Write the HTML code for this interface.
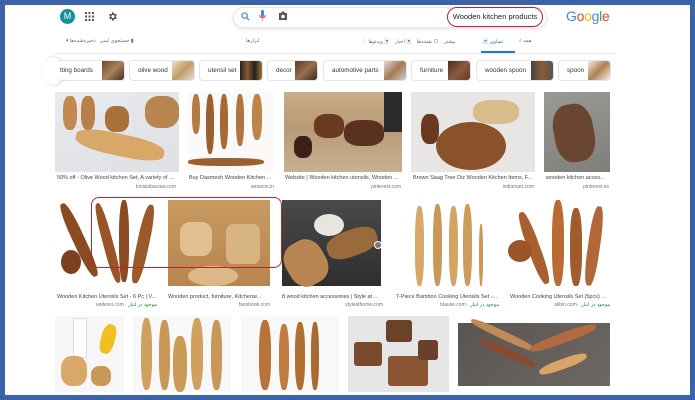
<!DOCTYPE html>
<html><head><meta charset="utf-8"><style>
*{margin:0;padding:0;box-sizing:border-box}
body{width:695px;height:400px;background:#3a62a6;position:relative;overflow:hidden;font-family:"Liberation Sans","Noto Sans CJK SC",sans-serif}
.in{position:absolute;left:5px;top:5px;width:685px;height:390px;background:#fff;overflow:hidden}
.a{position:absolute}
.chip{position:absolute;top:60px;height:21px;border:1px solid #e4e4e4;border-radius:4px;background:#fff;font-size:6.3px;color:#333;line-height:19px;padding-left:8px;overflow:hidden;white-space:nowrap}
.chip i{position:absolute;right:0;top:0;width:22px;height:19px}
.cap{position:absolute;font-size:5.5px;color:#444;white-space:nowrap;overflow:hidden}
.src{position:absolute;font-size:5px;color:#777;text-align:right;white-space:nowrap}
.w{position:absolute;border-radius:40%;}
</style></head><body>
<div class="in"></div>
<div class="a" style="left:60px;top:9px;width:15px;height:15px;border-radius:50%;background:#12919a;color:#fff;font-size:9px;text-align:center;line-height:15px">M</div>
<svg class="a" style="left:85px;top:12px" width="9" height="9"><g fill="#555"><rect x="0" y="0" width="2" height="2"/><rect x="3.5" y="0" width="2" height="2"/><rect x="7" y="0" width="2" height="2"/><rect x="0" y="3.5" width="2" height="2"/><rect x="3.5" y="3.5" width="2" height="2"/><rect x="7" y="3.5" width="2" height="2"/><rect x="0" y="7" width="2" height="2"/><rect x="3.5" y="7" width="2" height="2"/><rect x="7" y="7" width="2" height="2"/></g></svg>
<svg class="a" style="left:107px;top:11px" width="11" height="11" viewBox="0 0 24 24"><path fill="#555" d="M19.4 13a7 7 0 000-2l2.1-1.6-2-3.5-2.5 1a7 7 0 00-1.7-1L15 3h-4l-.4 2.9a7 7 0 00-1.7 1l-2.5-1-2 3.5L6.6 11a7 7 0 000 2l-2.1 1.6 2 3.5 2.5-1a7 7 0 001.7 1L11 21h4l.4-2.9a7 7 0 001.7-1l2.5 1 2-3.5zM13 15.5a3.5 3.5 0 110-7 3.5 3.5 0 010 7z"/></svg>
<div class="a" style="left:233px;top:7px;width:314px;height:21px;border:1px solid #e8e8e8;border-radius:11px;box-shadow:0 1px 3px rgba(0,0,0,.12)"></div>
<svg class="a" style="left:241px;top:12px" width="9" height="9" viewBox="0 0 10 10"><circle cx="4" cy="4" r="3" fill="none" stroke="#4285f4" stroke-width="1.3"/><path d="M6.2 6.2L9 9" stroke="#4285f4" stroke-width="1.4"/></svg>
<svg class="a" style="left:259px;top:10px" width="7" height="12" viewBox="0 0 7 12"><rect x="2" y="0" width="3" height="7" rx="1.5" fill="#4285f4"/><path d="M0.7 5a2.8 2.8 0 005.6 0" fill="none" stroke="#ea4335" stroke-width="1"/><rect x="3" y="8" width="1" height="3" fill="#fbbc05"/></svg>
<svg class="a" style="left:278px;top:11px" width="10" height="10" viewBox="0 0 10 10"><path d="M1 2h2l1-1.5h2L7 2h2v7H1z" fill="#555"/><circle cx="5" cy="5.5" r="1.8" fill="#fff"/></svg>
<div class="a" style="left:447px;top:7px;width:96px;height:20px;border:1.5px solid #c8202a;border-radius:10px;font-size:7.5px;color:#222;text-align:center;line-height:17px">Wooden kitchen products</div>
<div class="a" style="left:566px;top:8px;font-size:14px;letter-spacing:-.3px"><span style="color:#4285f4">G</span><span style="color:#ea4335">o</span><span style="color:#fbbc05">o</span><span style="color:#4285f4">g</span><span style="color:#34a853">l</span><span style="color:#ea4335">e</span></div>
<div class="a" style="left:66px;top:38px;font-size:5px;color:#666">▾ جستجوی ایمن &nbsp; ذخیره‌شده‌ها ▮</div>
<div class="a" style="left:246px;top:38px;font-size:5px;color:#666">ابزارها</div>
<div class="a" style="left:362px;top:38px;font-size:5px;color:#666">⋮ بیشتر &nbsp;&nbsp; ⊙ نقشه‌ها &nbsp;&nbsp; ▣ اخبار &nbsp;&nbsp; ▣ ویدئوها</div>
<div class="a" style="left:483px;top:38px;font-size:5px;color:#1a73e8">▣ تصاویر</div>
<div class="a" style="left:519px;top:38px;font-size:5px;color:#666">⌕ همه</div>
<div class="a" style="left:481px;top:51px;width:34px;height:2px;background:#1a73e8"></div>
<div class="a" style="left:55px;top:53px;width:561px;height:1px;background:#ebebeb"></div>
<div class="a" style="left:42px;top:57px;width:22px;height:28px;border-radius:50%;background:#fff;box-shadow:1px 0 3px rgba(0,0,0,.2)"></div>
<div class="chip" style="left:58px;width:67px;border-left:0;padding-left:2px">tting boards<i style="background:linear-gradient(135deg,#6a4a30,#a8835a,#4a3020)"></i></div>
<div class="chip" style="left:129px;width:66px">olive wood<i style="background:linear-gradient(135deg,#e8e0d0,#c49a60,#ddd)"></i></div>
<div class="chip" style="left:199px;width:64px">utensil set<i style="background:linear-gradient(90deg,#222,#8a5a30,#222,#a0703a)"></i></div>
<div class="chip" style="left:267px;width:51px">decor<i style="background:linear-gradient(135deg,#5a3a25,#9a7050,#3a2818)"></i></div>
<div class="chip" style="left:323px;width:84px">automotive parts<i style="background:linear-gradient(135deg,#ddd,#a57a50,#ccc)"></i></div>
<div class="chip" style="left:411px;width:60px">furniture<i style="background:linear-gradient(135deg,#4a2a20,#8a5a40,#6a3a2a)"></i></div>
<div class="chip" style="left:476px;width:78px">wooden spoon<i style="background:linear-gradient(90deg,#444,#8a5a35,#555)"></i></div>
<div class="chip" style="left:558px;width:53px">spoon<i style="background:linear-gradient(135deg,#eee,#b08050,#eee)"></i></div>
<div class="a" style="left:55px;top:92px;width:124px;height:80px;background:linear-gradient(160deg,#e8eaee,#dfe0e4)">
 <div class="w" style="left:8px;top:4px;width:14px;height:34px;background:#c08a50"></div><div class="w" style="left:26px;top:4px;width:14px;height:34px;background:#b88048"></div>
 <div class="w" style="left:50px;top:14px;width:24px;height:26px;background:#a8703a"></div><div class="w" style="left:90px;top:4px;width:34px;height:32px;background:#b88450"></div>
 <div class="w" style="left:20px;top:42px;width:90px;height:22px;background:#d8a868;transform:rotate(12deg)"></div></div>
<div class="a" style="left:188px;top:92px;width:86px;height:80px;background:#fbfaf8">
 <div class="w" style="left:4px;top:2px;width:8px;height:40px;background:#b47a40"></div><div class="w" style="left:18px;top:2px;width:8px;height:60px;background:#9a6030"></div><div class="w" style="left:32px;top:2px;width:8px;height:55px;background:#a86a35"></div><div class="w" style="left:48px;top:2px;width:8px;height:52px;background:#b07440"></div><div class="w" style="left:64px;top:2px;width:10px;height:46px;background:#c08448"></div><div class="w" style="left:0px;top:66px;width:76px;height:8px;background:#9a6030"></div></div>
<div class="a" style="left:284px;top:92px;width:118px;height:80px;background:linear-gradient(180deg,#c9ad88,#b89a75 45%,#c8b090)">
 <div class="a" style="left:100px;top:0;width:18px;height:40px;background:#2a2a2a"></div><div class="w" style="left:30px;top:22px;width:30px;height:24px;background:#6a3a20"></div><div class="w" style="left:60px;top:28px;width:40px;height:26px;background:#5a3020"></div><div class="w" style="left:10px;top:44px;width:18px;height:22px;background:#3a2218"></div></div>
<div class="a" style="left:411px;top:92px;width:124px;height:80px;background:#e8e6e4">
 <div class="w" style="left:25px;top:30px;width:70px;height:48px;border-radius:50%;background:#8a5228"></div><div class="w" style="left:62px;top:8px;width:46px;height:24px;background:#d8bc8c"></div><div class="w" style="left:10px;top:22px;width:18px;height:30px;background:#6a3a20"></div></div>
<div class="a" style="left:544px;top:92px;width:66px;height:80px;background:linear-gradient(160deg,#9a9a98,#7e7e7a)">
 <div class="w" style="left:10px;top:12px;width:40px;height:58px;background:#6a4630;transform:rotate(-10deg)"></div></div>
<div class="cap" style="left:57px;top:175px;width:120px">50% off - Olive Wood kitchen Set, A variety of ...</div><div class="src" style="left:57px;top:184px;width:119px">tunisiabazaar.com</div>
<div class="cap" style="left:189px;top:175px;width:85px">Buy Dasmesh Wooden Kitchen ...</div><div class="src" style="left:189px;top:184px;width:85px">amazon.in</div>
<div class="cap" style="left:285px;top:175px;width:117px">Website | Wooden kitchen utensils, Wooden ...</div><div class="src" style="left:285px;top:184px;width:116px">pinterest.com</div>
<div class="cap" style="left:413px;top:175px;width:122px">Brown Saag Tree Diz Wooden Kitchen Items, F...</div><div class="src" style="left:413px;top:184px;width:121px">indiamart.com</div>
<div class="cap" style="left:546px;top:175px;width:64px">wooden kitchen acces...</div><div class="src" style="left:546px;top:184px;width:63px">pinterest.es</div>
<div class="a" style="left:55px;top:200px;width:102px;height:86px;background:#fff">
 <div class="w" style="left:18px;top:0;width:12px;height:80px;background:#8a4a22;transform:rotate(-25deg)"></div><div class="w" style="left:48px;top:2px;width:10px;height:82px;background:#9a5428;transform:rotate(-15deg)"></div><div class="w" style="left:64px;top:0;width:10px;height:82px;background:#8a4a22"></div><div class="w" style="left:82px;top:4px;width:12px;height:80px;background:#9a5a2a;transform:rotate(12deg)"></div><div class="w" style="left:6px;top:50px;width:20px;height:24px;border-radius:50%;background:#7a4020"></div></div>
<div class="a" style="left:168px;top:200px;width:102px;height:86px;background:linear-gradient(180deg,#c89a62,#b88550)">
 <div class="w" style="left:12px;top:22px;width:32px;height:34px;border-radius:30%;background:#e0c090"></div><div class="w" style="left:58px;top:24px;width:34px;height:40px;border-radius:20%;background:#d8b480"></div><div class="w" style="left:20px;top:66px;width:50px;height:20px;border-radius:50%;background:#dcb888"></div></div>
<div class="a" style="left:282px;top:200px;width:99px;height:86px;background:linear-gradient(180deg,#4a4a4a,#2e2e2e)">
 <div class="w" style="left:32px;top:14px;width:30px;height:22px;border-radius:50%;background:#e8e4e0"></div><div class="w" style="left:4px;top:40px;width:40px;height:46px;background:#b88450;transform:rotate(-30deg)"></div><div class="w" style="left:44px;top:30px;width:52px;height:26px;background:#9a6a3c;transform:rotate(-20deg)"></div></div>
<div class="a" style="left:395px;top:200px;width:105px;height:86px;background:#fff">
 <div class="w" style="left:20px;top:6px;width:9px;height:80px;background:#d8a868"></div><div class="w" style="left:38px;top:4px;width:9px;height:82px;background:#c89858"></div><div class="w" style="left:54px;top:6px;width:9px;height:80px;background:#d4a464"></div><div class="w" style="left:68px;top:4px;width:9px;height:82px;background:#cc9c5c"></div><div class="w" style="left:84px;top:24px;width:4px;height:62px;background:#c89858"></div></div>
<div class="a" style="left:508px;top:200px;width:102px;height:86px;background:#fff">
 <div class="w" style="left:20px;top:10px;width:12px;height:76px;background:#a86030;transform:rotate(-20deg)"></div><div class="w" style="left:44px;top:0;width:12px;height:86px;background:#b86c34"></div><div class="w" style="left:62px;top:8px;width:12px;height:78px;background:#a05c2c"></div><div class="w" style="left:80px;top:6px;width:12px;height:80px;background:#b0683a;transform:rotate(8deg)"></div><div class="w" style="left:0;top:40px;width:24px;height:22px;border-radius:50%;background:#9a5428"></div></div>
<div class="a" style="left:91px;top:197px;width:191px;height:71px;border:1.5px solid #c8202a;border-radius:8px"></div>
<div class="a" style="left:374px;top:241px;width:8px;height:8px;border-radius:50%;background:#777;border:1px solid #fff"></div>
<div class="cap" style="left:57px;top:294px;width:100px">Wooden Kitchen Utensils Set - 6 Pc | V...</div><div class="src" style="left:57px;top:302px;width:100px">vedessi.com · <span style="color:#188038">موجود در انبار</span></div>
<div class="cap" style="left:168px;top:294px;width:102px">Wooden product,  furniture,  Kitchenw...</div><div class="src" style="left:168px;top:302px;width:102px">facebook.com</div>
<div class="cap" style="left:282px;top:294px;width:100px">8 wood kitchen accessories | Style at ...</div><div class="src" style="left:282px;top:302px;width:101px">styleathome.com</div>
<div class="cap" style="left:396px;top:294px;width:104px">7-Piece Bamboo Cooking Utensils Set -...</div><div class="src" style="left:396px;top:302px;width:103px">blauke.com · <span style="color:#188038">موجود در انبار</span></div>
<div class="cap" style="left:510px;top:294px;width:100px">Wooden Cooking Utensils Set (5pcs) ...</div><div class="src" style="left:510px;top:302px;width:100px">alibin.com · <span style="color:#188038">موجود در انبار</span></div>
<div class="a" style="left:55px;top:316px;width:69px;height:76px;background:#f6f6f6">
 <div class="a" style="left:18px;top:2px;width:14px;height:40px;background:#fff;border:1px solid #ddd"></div><div class="w" style="left:46px;top:8px;width:14px;height:30px;background:#f0c020;transform:rotate(15deg)"></div><div class="w" style="left:6px;top:40px;width:26px;height:30px;background:#d8a868"></div><div class="w" style="left:36px;top:50px;width:20px;height:20px;background:#c89858"></div></div>
<div class="a" style="left:133px;top:316px;width:98px;height:76px;background:#f8f8f8">
 <div class="w" style="left:8px;top:2px;width:11px;height:72px;background:#d0a060"></div><div class="w" style="left:26px;top:4px;width:11px;height:70px;background:#c89858"></div><div class="w" style="left:40px;top:20px;width:14px;height:56px;background:#c99a58"></div><div class="w" style="left:58px;top:2px;width:12px;height:72px;background:#d0a060"></div><div class="w" style="left:78px;top:4px;width:11px;height:70px;background:#c89858"></div></div>
<div class="a" style="left:241px;top:316px;width:98px;height:76px;background:#f8f8f8">
 <div class="w" style="left:18px;top:4px;width:12px;height:70px;background:#b87438"></div><div class="w" style="left:38px;top:8px;width:10px;height:66px;background:#c07c40"></div><div class="w" style="left:54px;top:6px;width:10px;height:68px;background:#b07034"></div><div class="w" style="left:70px;top:6px;width:8px;height:68px;background:#a86a30"></div></div>
<div class="a" style="left:348px;top:316px;width:101px;height:76px;background:#e6e6e6">
 <div class="w" style="left:38px;top:4px;width:26px;height:22px;border-radius:3px;background:#6a4228"></div><div class="w" style="left:6px;top:26px;width:28px;height:24px;border-radius:3px;background:#7a4a2c"></div><div class="w" style="left:40px;top:40px;width:40px;height:30px;border-radius:3px;background:#8a5634"></div><div class="w" style="left:70px;top:24px;width:20px;height:20px;border-radius:3px;background:#6a4028"></div></div>
<div class="a" style="left:458px;top:323px;width:152px;height:63px;background:linear-gradient(135deg,#5a5552,#6e6864)">
 <div class="w" style="left:10px;top:8px;width:70px;height:8px;background:#c08a58;transform:rotate(25deg)"></div><div class="w" style="left:20px;top:26px;width:60px;height:8px;background:#8a4a30;transform:rotate(25deg)"></div><div class="w" style="left:70px;top:10px;width:70px;height:10px;background:#b46a40;transform:rotate(-20deg)"></div><div class="w" style="left:80px;top:36px;width:50px;height:10px;background:#d8a468;transform:rotate(-20deg)"></div></div>
</body></html>
